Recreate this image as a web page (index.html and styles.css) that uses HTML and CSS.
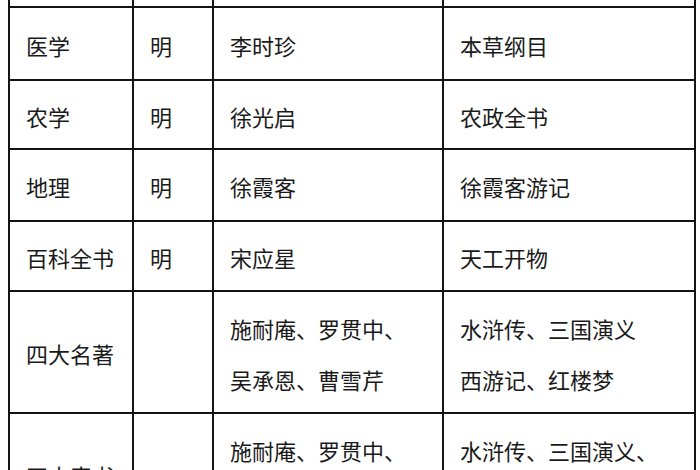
FILE: index.html
```html
<!DOCTYPE html>
<html lang="zh-CN">
<head>
<meta charset="utf-8">
<title>明代科技与文学</title>
<link rel="stylesheet" href="styles.css">
</head>
<body>
<table class="grid">
  <colgroup>
    <col class="c1"><col class="c2"><col class="c3"><col class="c4">
  </colgroup>
  <tr class="stub"><td></td><td></td><td></td><td></td></tr>
  <tr class="r72a"><td>医学</td><td>明</td><td>李时珍</td><td>本草纲目</td></tr>
  <tr class="r69"><td>农学</td><td>明</td><td>徐光启</td><td>农政全书</td></tr>
  <tr class="r72"><td>地理</td><td>明</td><td>徐霞客</td><td>徐霞客游记</td></tr>
  <tr class="r70"><td>百科全书</td><td>明</td><td>宋应星</td><td>天工开物</td></tr>
  <tr class="tall"><td>四大名著</td><td></td><td>施耐庵、罗贯中、<br>吴承恩、曹雪芹</td><td>水浒传、三国演义<br>西游记、红楼梦</td></tr>
  <tr class="tall"><td>四大奇书</td><td></td><td>施耐庵、罗贯中、<br>吴承恩、兰陵笑笑生</td><td>水浒传、三国演义、<br>西游记、金瓶梅</td></tr>
</table>
</body>
</html>
```

FILE: styles.css
```css
html, body {
  margin: 0;
  padding: 0;
  background: #ffffff;
}
body {
  padding: 0 0 0 8px;
  font-family: "SimSun", "Noto Sans CJK SC", "Noto Sans", sans-serif;
  color: #1a1a1a;
}
.grid {
  border-collapse: collapse;
  table-layout: fixed;
  width: 686px;
}
.c1 { width: 124px; }
.c2 { width: 80px; }
.c3 { width: 230px; }
.c4 { width: 252px; }
.grid td {
  border: 2px solid #141414;
  padding: 3px 15px 0 16px;
  font-size: 22px;
  line-height: 51px;
  vertical-align: middle;
  white-space: nowrap;
  overflow: hidden;
}
.grid .stub td {
  border-top: none;
  height: 6px;
  padding: 0;
  line-height: 0;
}
.r72a td { height: 68px; }
.r72 td { height: 67px; }
.r69 td { height: 64px; }
.r70 td { height: 65px; }
.tall td { height: 117px; }
```
